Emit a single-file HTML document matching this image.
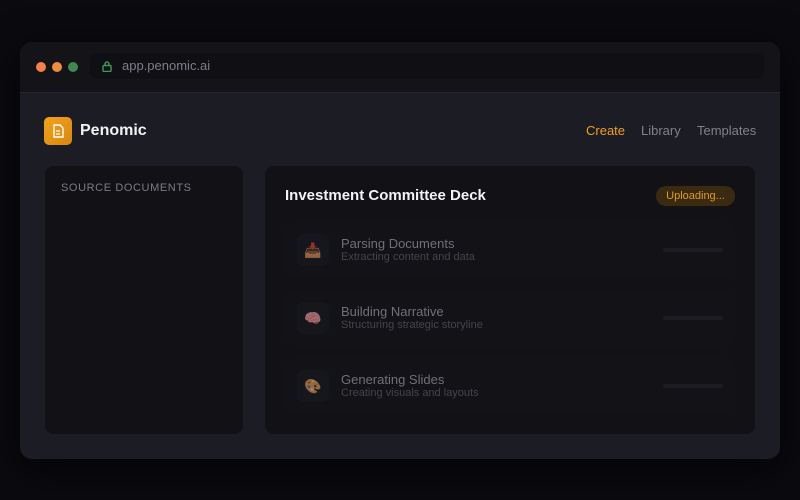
<!DOCTYPE html>
<html><head><style>
*{margin:0;padding:0;box-sizing:border-box}
body{width:800px;height:500px;background:#0a0a0f;font-family:"Liberation Sans",sans-serif;position:relative;overflow:hidden}
.win{position:absolute;left:20px;top:42px;width:760px;height:417px;border-radius:12px;background:#1b1c24;overflow:hidden;box-shadow:0 10px 40px rgba(0,0,0,.6)}
.bar{height:51px;background:#131318;border-bottom:1px solid #24252d;position:relative}
.dot{position:absolute;top:20px;width:10px;height:10px;border-radius:50%}
.url{position:absolute;left:70px;top:11px;width:674px;height:26px;border-radius:7px;background:#0f0f14;color:#7d7f88;font-size:13px;line-height:26px;padding-left:32px}
.logo{position:absolute;left:24px;top:75px;width:28px;height:28px;border-radius:5px;background:linear-gradient(135deg,#f3a21a,#d9860f)}
.brand{position:absolute;left:60px;top:80px;color:#f2f2f4;font-weight:bold;font-size:16px}
.nav{position:absolute;top:81px;font-size:13px;color:#80828b}
.panel{position:absolute;background:#111116;border-radius:9px}
.row{position:absolute;left:20px;width:450px;height:56px;border-radius:8px;background:#121217}
.ic{position:absolute;left:12px;top:12px;width:32px;height:32px;border-radius:7px;background:#1a1b21;font-size:14px;text-align:center;line-height:32px;opacity:.6}
.t{position:absolute;left:56px;top:14px;font-size:13px;color:#6f7078}
.s{position:absolute;left:56px;top:29px;font-size:11px;color:#44454c}
.pb{position:absolute;left:378px;top:26px;width:60px;height:4px;border-radius:2px;background:#1c1d23}
</style></head><body>
<div class="win">
 <div class="bar">
  <div class="dot" style="left:16px;background:#f5804a"></div>
  <div class="dot" style="left:32px;background:#f08d3a"></div>
  <div class="dot" style="left:48px;background:#3f8a52"></div>
  <div class="url"><svg style="position:absolute;left:12px;top:8px" width="10" height="11" viewBox="0 0 10 11"><rect x="1" y="4.5" width="8" height="6" rx="1" fill="none" stroke="#3f9a55" stroke-width="1.4"/><path d="M3 4.5V3a2 2 0 0 1 4 0v1.5" fill="none" stroke="#3f9a55" stroke-width="1.4"/></svg>app.penomic.ai</div>
 </div>
 <div class="logo"><svg width="28" height="28" viewBox="0 0 28 28"><path d="M10 8h6l3 3v9h-9z" fill="none" stroke="#fff" stroke-width="1.4"/><path d="M12 14h4M12 17h4" stroke="#fff" stroke-width="1.2"/></svg></div>
 <div class="brand">Penomic</div>
 <div class="nav" style="left:566px;color:#f0a020">Create</div>
 <div class="nav" style="left:621px">Library</div>
 <div class="nav" style="left:677px">Templates</div>
 <div class="panel" style="left:25px;top:124px;width:198px;height:268px">
  <div style="position:absolute;left:16px;top:16px;font-size:11px;letter-spacing:.6px;color:#7a7c85">SOURCE DOCUMENTS</div>
 </div>
 <div class="panel" style="left:245px;top:124px;width:490px;height:268px">
  <div style="position:absolute;left:20px;top:21px;font-size:15px;font-weight:bold;color:#f3f3f5">Investment Committee Deck</div>
  <div style="position:absolute;left:391px;top:20px;width:79px;height:20px;border-radius:10px;background:#3a2a10;color:#e09a22;font-size:11px;text-align:center;line-height:20px">Uploading...</div>
  <div class="row" style="top:56px"><div class="ic">📥</div><div class="t">Parsing Documents</div><div class="s">Extracting content and data</div><div class="pb"></div></div>
  <div class="row" style="top:124px"><div class="ic">🧠</div><div class="t">Building Narrative</div><div class="s">Structuring strategic storyline</div><div class="pb"></div></div>
  <div class="row" style="top:192px"><div class="ic">🎨</div><div class="t">Generating Slides</div><div class="s">Creating visuals and layouts</div><div class="pb"></div></div>
 </div>
</div>
</body></html>
